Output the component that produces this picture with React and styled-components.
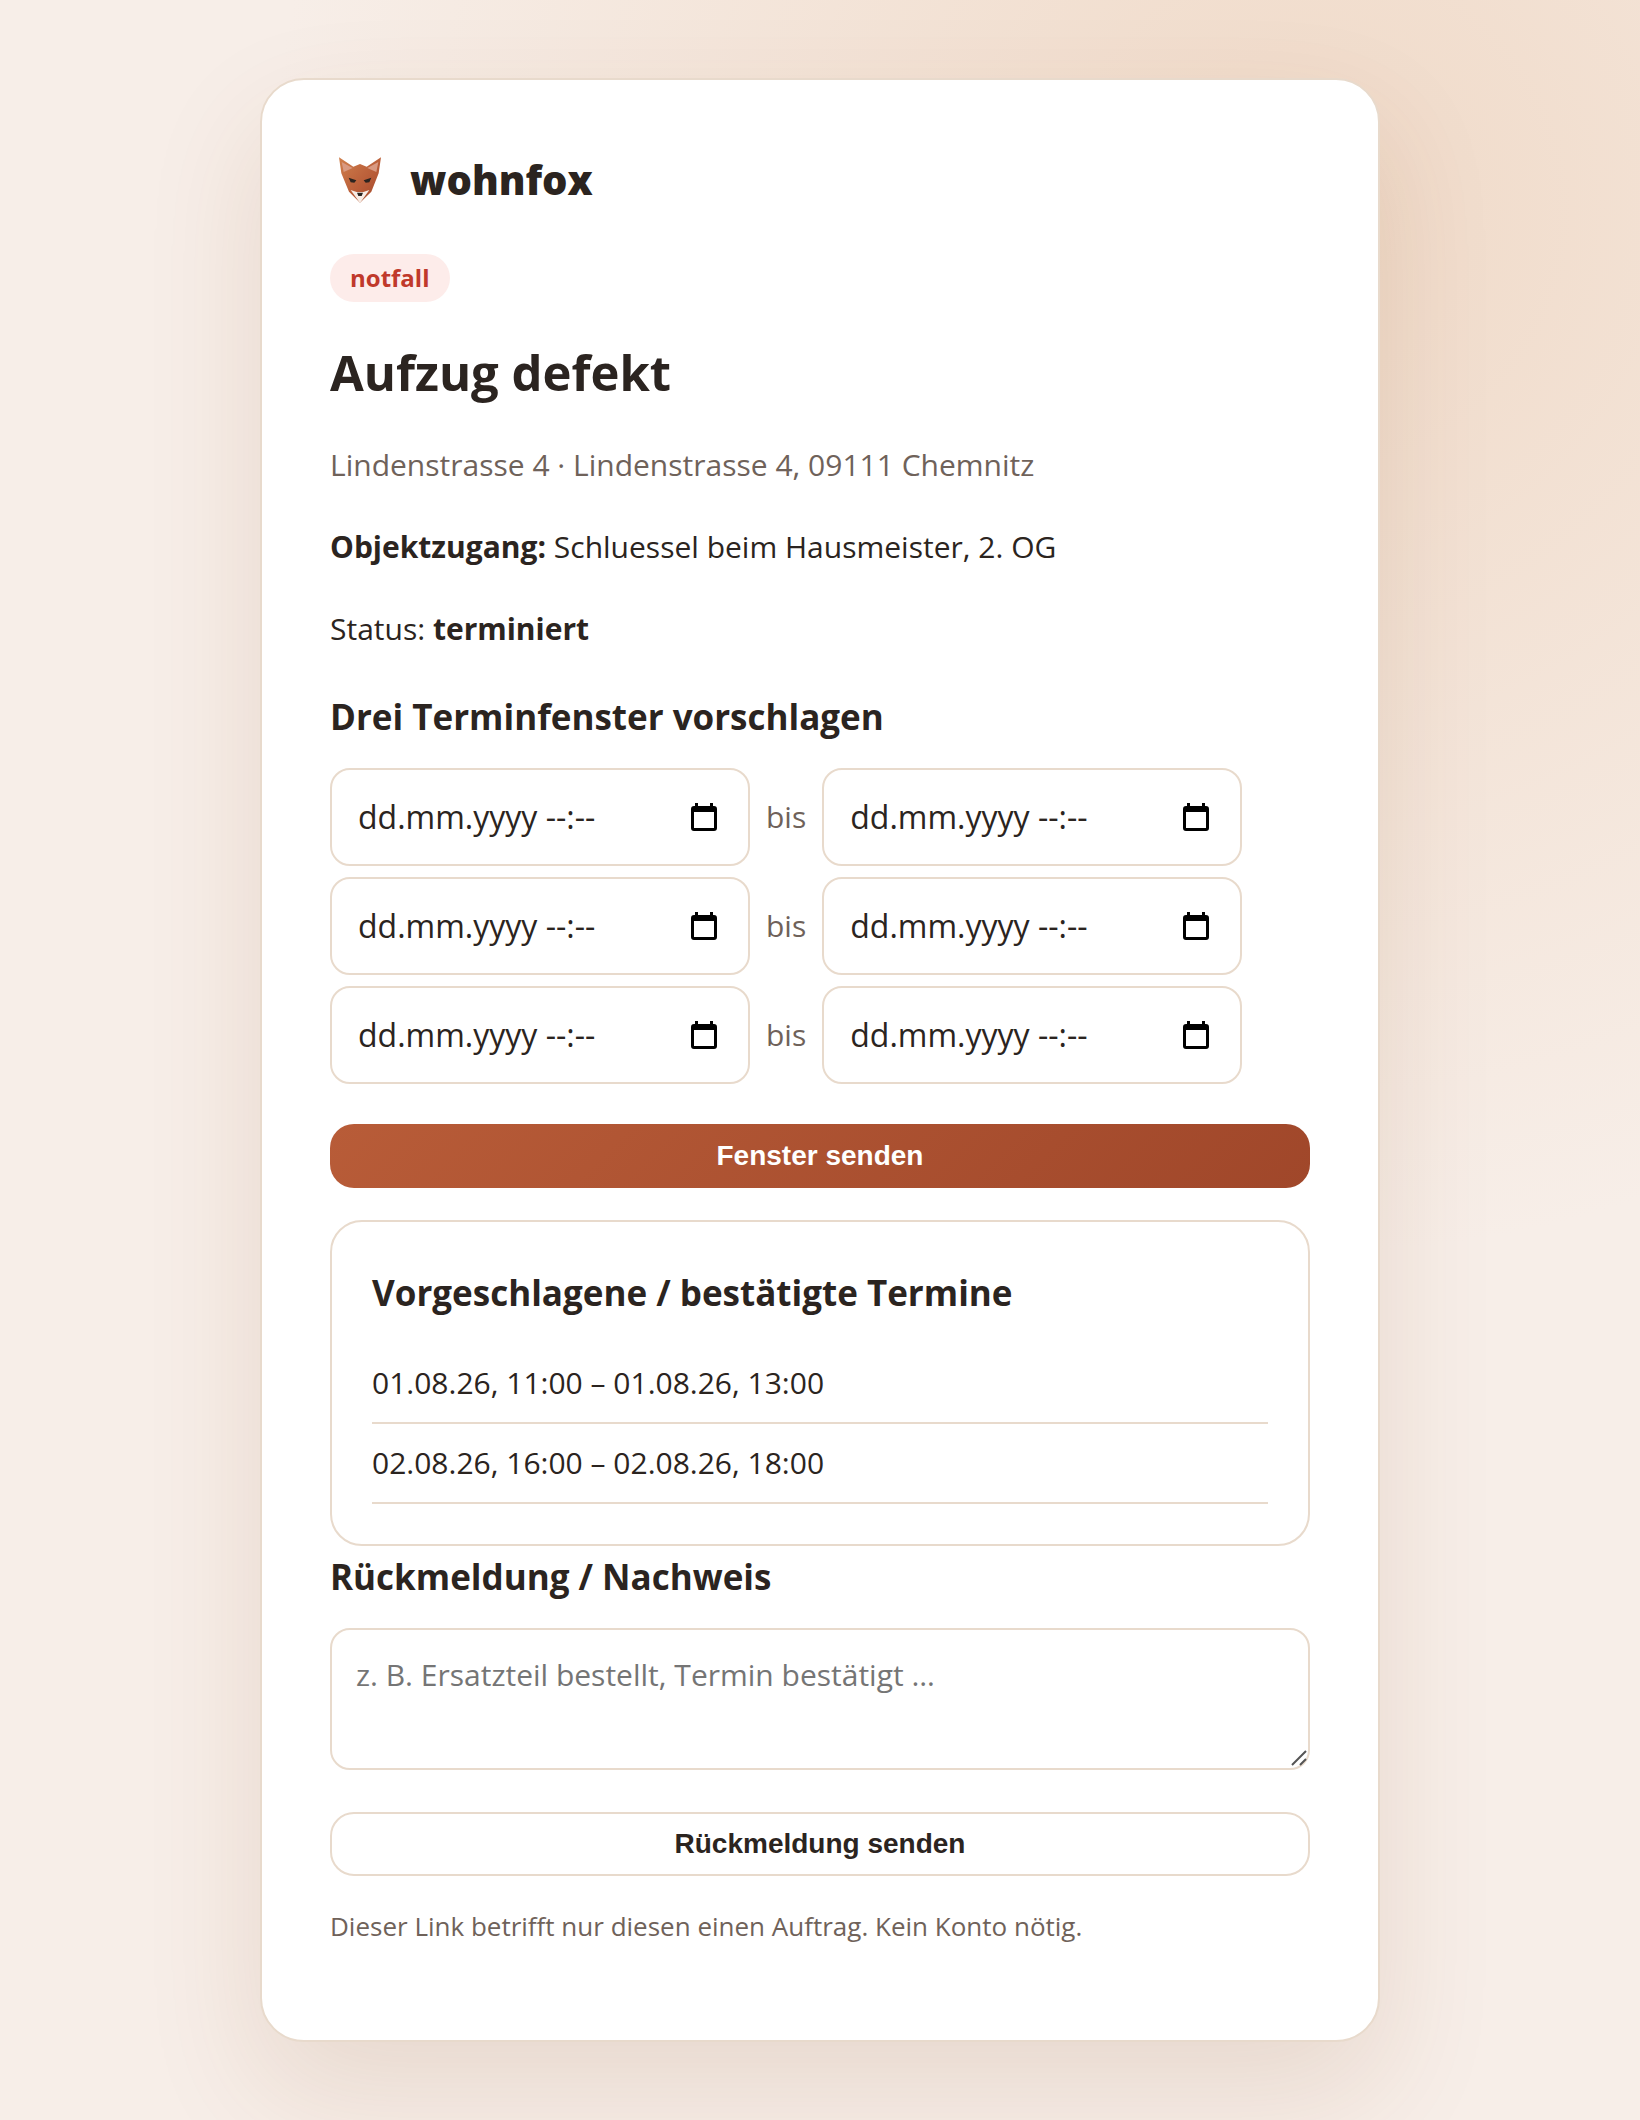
import { useState } from "react";
import styled, { createGlobalStyle } from "styled-components";

const GlobalStyle = createGlobalStyle`
    * {
        box-sizing: border-box;
    }
    body {
        margin: 0;
        font-family: "Segoe UI", "Open Sans", "Noto Sans", sans-serif;
        font-size: 30px;
        line-height: 50px;
        color: #2b2420;
        background: #f7eee8;
    }
`;
const Page = styled.div`
    min-height: 100vh;
    display: flex;
    align-items: center;
    justify-content: center;
    padding: 78px 48px;
    background: radial-gradient(circle at 80% 10%, #f0dac8, transparent 45%), #f7eee8;
`;
const Card = styled.main`
    width: 100%;
    max-width: 1120px;
    padding: 68px;
    border: 2px solid #e8dacc;
    border-radius: 44px;
    background: #fff;
    box-shadow: 0 48px 120px rgba(120, 60, 20, 0.12);
`;
const Brand = styled.header`
    display: flex;
    align-items: center;
    gap: 20px;
    height: 64px;
    margin-bottom: 42px;
`;
const BrandName = styled.span`
    font-size: 40px;
    font-weight: 800;
`;
const Badge = styled.span`
    display: block;
    width: fit-content;
    padding: 0 20px;
    border-radius: 24px;
    font-size: 24px;
    font-weight: 700;
    line-height: 48px;
    color: #c0392b;
    background: #fdecea;
`;
const Title = styled.h1`
    margin: 38px 0 36px;
    font-size: 49px;
    line-height: 64px;
`;
const Text = styled.p`
    margin: 32px 0;
    color: ${({ $muted }) => ($muted ? "#6f625a" : "inherit")};
`;
const Heading = styled.h2`
    margin: 0 0 20px;
    font-size: 35px;
    line-height: 62px;
`;
const Slots = styled.form`
    display: flex;
    flex-direction: column;
    gap: 11px;
`;
const Slot = styled.div`
    display: flex;
    flex-wrap: wrap;
    align-items: center;
    gap: 16px;
    color: #6f625a;
`;
const DateField = styled.label`
    display: flex;
    align-items: center;
    width: 420px;
    height: 98px;
    padding: 0 31px 0 26px;
    border: 2px solid #e8dacc;
    border-radius: 20px;
    background: #fff;
`;
const DateInput = styled.input`
    flex: 1;
    min-width: 0;
    padding: 0;
    border: 0;
    outline: 0;
    background: transparent;
    font: inherit;
    font-size: 32px;
    color: #2b2420;

    &::placeholder {
        color: #2b2420;
        opacity: 1;
    }
`;
const Button = styled.button`
    display: block;
    width: 100%;
    height: 64px;
    margin-top: ${({ $primary }) => ($primary ? "29px" : "42px")};
    border: ${({ $primary }) => ($primary ? "0" : "2px solid #e8dacc")};
    border-radius: 24px;
    font-family: "Liberation Sans", Arial, sans-serif;
    font-size: 28px;
    font-weight: 700;
    color: ${({ $primary }) => ($primary ? "#fff" : "#2b2420")};
    background: ${({ $primary }) => ($primary ? "linear-gradient(135deg, #b85c38, #a0472a)" : "#fff")};
    cursor: pointer;
`;
const Panel = styled.section`
    margin-top: 32px;
    padding: 40px;
    border: 2px solid #e8dacc;
    border-radius: 32px;
`;
const List = styled.ul`
    margin: 0;
    padding: 0;
    list-style: none;
`;
const Item = styled.li`
    padding: 14px 0;
    border-bottom: 2px solid #e8dacc;
`;
const NoteBox = styled.div`
    position: relative;
`;
const Note = styled.textarea`
    display: block;
    width: 100%;
    height: 142px;
    padding: 20px 24px;
    border: 2px solid #e8dacc;
    border-radius: 20px;
    background: #fff;
    font: inherit;
    color: #2b2420;
    resize: vertical;

    &::placeholder {
        color: #757575;
    }
    &::-webkit-resizer {
        background: transparent;
    }
`;
const Grip = styled.svg`
    position: absolute;
    right: 3px;
    bottom: 4px;
    pointer-events: none;
`;
const Footnote = styled.p`
    margin: 28px 0 24px;
    font-size: 26px;
    line-height: 44px;
    color: #6f625a;
`;

const FoxLogo = () => (
    <svg width="60" height="60" viewBox="0 0 180 180" aria-hidden="true">
        <defs>
            <linearGradient id="fur" x1="0" y1="0" x2="1" y2="1">
                <stop offset="0" stopColor="#d07f4c" />
                <stop offset="0.6" stopColor="#b85c38" />
                <stop offset="1" stopColor="#a04628" />
            </linearGradient>
        </defs>
        <path d="M27 22 70 50 90 42 110 50 153 22 146 70 124 125 90 158 57 125 34 70Z" fill="url(#fur)" />
        <path d="M35 36 68 54 41 66ZM145 36 112 54 139 66Z" fill="#d99a82" />
        <path d="M56 83 79 91 73 98 62 97ZM124 83 101 91 107 98 118 97Z" fill="#2b2420" />
        <path d="M62 120 80 126 100 126 118 120 90 159Z" fill="#f8ede6" />
        <path d="M81 128H99L95 138H85Z" fill="#2b2420" />
    </svg>
);

const CalendarIcon = () => (
    <svg width="26" height="28" viewBox="0 0 26 28" aria-hidden="true">
        <path d="M4 0H7V3H19V0H22V3H23Q26 3 26 6V25Q26 28 23 28H3Q0 28 0 25V6Q0 3 3 3H4ZM3 9V25H23V9Z" fill="#000" fillRule="evenodd" />
    </svg>
);

const DateTime = ({ label, value, onChange }) => (
    <DateField>
        <DateInput
            type="text"
            aria-label={label}
            placeholder="dd.mm.yyyy --:--"
            value={value}
            onChange={(e) => onChange(e.target.value)}
        />
        <CalendarIcon />
    </DateField>
);

const appointments = [
    "01.08.26, 11:00 – 01.08.26, 13:00",
    "02.08.26, 16:00 – 02.08.26, 18:00",
];

const App = () => {
    const [slots, setSlots] = useState([
        { from: "", to: "" },
        { from: "", to: "" },
        { from: "", to: "" },
    ]);
    const [note, setNote] = useState("");

    const updateSlot = (index, key, value) => {
        setSlots(slots.map((slot, i) => (i === index ? { ...slot, [key]: value } : slot)));
    }

    return (
        <>
            <GlobalStyle />
            <Page>
                <Card>
                    <Brand>
                        <FoxLogo />
                        <BrandName>wohnfox</BrandName>
                    </Brand>
                    <Badge>notfall</Badge>
                    <Title>Aufzug defekt</Title>
                    <Text $muted>Lindenstrasse 4 · Lindenstrasse 4, 09111 Chemnitz</Text>
                    <Text><strong>Objektzugang:</strong> Schluessel beim Hausmeister, 2. OG</Text>
                    <Text>Status: <strong>terminiert</strong></Text>
                    <Heading>Drei Terminfenster vorschlagen</Heading>
                    <Slots onSubmit={(e) => e.preventDefault()}>
                        {slots.map((slot, i) => (
                            <Slot key={i}>
                                <DateTime label={`Fenster ${i + 1} von`} value={slot.from} onChange={(v) => updateSlot(i, "from", v)} />
                                <span>bis</span>
                                <DateTime label={`Fenster ${i + 1} bis`} value={slot.to} onChange={(v) => updateSlot(i, "to", v)} />
                            </Slot>
                        ))}
                        <Button $primary type="submit">Fenster senden</Button>
                    </Slots>
                    <Panel>
                        <Heading>Vorgeschlagene / bestätigte Termine</Heading>
                        <List>
                            {appointments.map((item) => <Item key={item}>{item}</Item>)}
                        </List>
                    </Panel>
                    <form onSubmit={(e) => e.preventDefault()}>
                        <Heading id="note-title">Rückmeldung / Nachweis</Heading>
                        <NoteBox>
                            <Note
                                aria-labelledby="note-title"
                                placeholder="z. B. Ersatzteil bestellt, Termin bestätigt …"
                                value={note}
                                onChange={(e) => setNote(e.target.value)}
                            />
                            <Grip width="16" height="16" viewBox="0 0 16 16" aria-hidden="true">
                                <path d="M1 15 15 1M9 15 15 9" stroke="#555" strokeWidth="2" />
                            </Grip>
                        </NoteBox>
                        <Button type="submit">Rückmeldung senden</Button>
                    </form>
                    <Footnote>Dieser Link betrifft nur diesen einen Auftrag. Kein Konto nötig.</Footnote>
                </Card>
            </Page>
        </>
    );
}

export default App
